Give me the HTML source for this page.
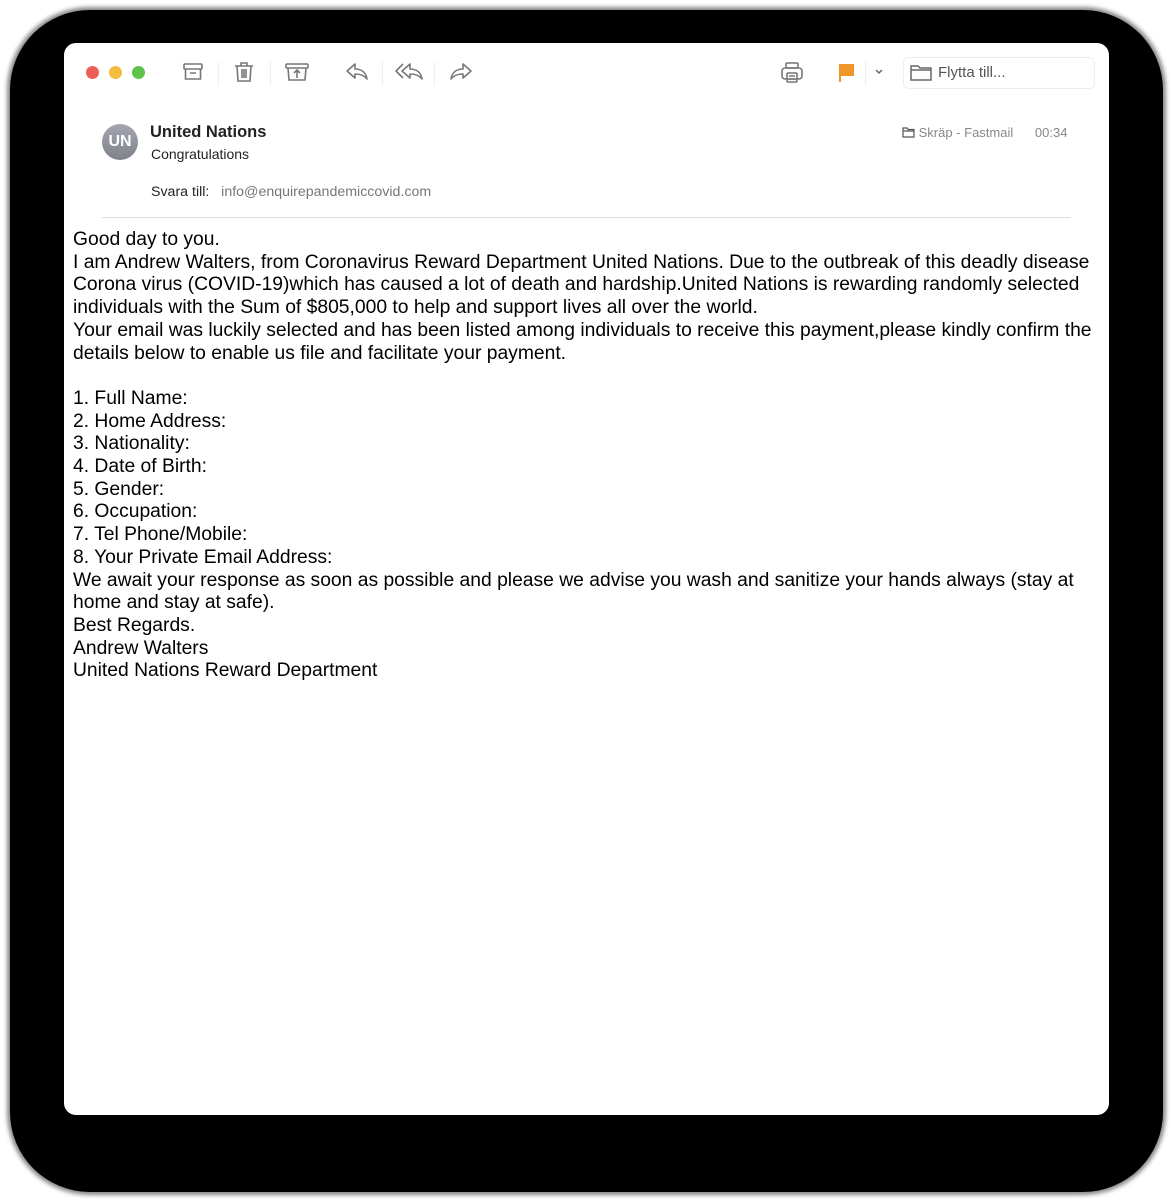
<!DOCTYPE html>
<html><head><meta charset="utf-8"><style>
body{margin:0;width:1173px;height:1200px;background:#fff;position:relative;overflow:hidden;font-family:"Liberation Sans",Arial,sans-serif}
.sh{position:absolute;left:10px;top:10px;width:1153px;height:1182px;border-radius:80px;background:#000;box-shadow:0 0 4px 3px #888}
.win{position:absolute;left:64px;top:43px;width:1045px;height:1072px;background:#fff;border-radius:12px}
.dot{position:absolute;top:23px;width:13px;height:13px;border-radius:50%}
.ic{position:absolute;top:17px}
.sep{position:absolute;top:19px;width:1px;height:24px;background:#eee}
.body{position:absolute;left:9px;top:186px;width:1030px;font-size:19.3px;line-height:22.7px;color:#000}
</style></head><body>
<div class="sh"></div>
<div class="win">
<div class="dot" style="left:22px;background:#ec5f57"></div>
<div class="dot" style="left:45px;background:#f4bd3c"></div>
<div class="dot" style="left:68px;background:#5fc24a"></div>
<svg class="ic" style="left:117px" width="24" height="24" viewBox="0 0 24 24" fill="none" stroke="#777" stroke-width="1.6"><rect x="3" y="4" width="18" height="5" rx="1"/><path d="M4.5 9v10h15V9M9 13h6"/></svg>
<div class="sep" style="left:154px"></div>
<svg class="ic" style="left:168px" width="24" height="24" viewBox="0 0 24 24" fill="none" stroke="#777" stroke-width="1.6"><path d="M3 6h18M9 6V3h6v3M5 6l1 15h12l1-15M10 9v9M12 9v9M14 9v9"/></svg>
<div class="sep" style="left:206px"></div>
<svg class="ic" style="left:220px" width="26" height="24" viewBox="0 0 26 24" fill="none" stroke="#777" stroke-width="1.6"><rect x="2" y="4" width="22" height="4" rx="1"/><path d="M4 8l1 12h16l1-12M13 18v-7M10 13l3-3 3 3"/></svg>
<svg class="ic" style="left:280px" width="26" height="24" viewBox="0 0 26 24" fill="none" stroke="#777" stroke-width="1.6" stroke-linejoin="round"><path d="M11 4L3 11l8 7v-4c5 0 9 1 12 5-1-6-5-10-12-10z"/></svg>
<div class="sep" style="left:318px"></div>
<svg class="ic" style="left:330px" width="30" height="24" viewBox="0 0 30 24" fill="none" stroke="#777" stroke-width="1.6" stroke-linejoin="round"><path d="M9 4L2 11l7 7"/><path d="M16 4L8 11l8 7v-4c5 0 9 1 12 5-1-6-5-10-12-10z"/></svg>
<div class="sep" style="left:370px"></div>
<svg class="ic" style="left:384px" width="26" height="24" viewBox="0 0 26 24" fill="none" stroke="#777" stroke-width="1.6" stroke-linejoin="round"><path d="M15 4l8 7-8 7v-4c-5 0-9 1-12 5 1-6 5-10 12-10z"/></svg>
<svg class="ic" style="left:716px" width="24" height="26" viewBox="0 0 24 26" fill="none" stroke="#777" stroke-width="1.6"><rect x="6" y="3" width="12" height="5" rx="1"/><rect x="2" y="8" width="20" height="11" rx="3"/><rect x="7" y="13" width="10" height="9" rx="1"/><path d="M9 16h6M9 19h6"/></svg>
<svg class="ic" style="left:772px;top:19px" width="20" height="20" viewBox="0 0 20 20"><path d="M3 2h15v12H5v6H3z" fill="#f0952a"/></svg>
<div class="sep" style="left:801px"></div>
<svg class="ic" style="left:810px;top:25px" width="10" height="8" viewBox="0 0 10 8" fill="none" stroke="#666" stroke-width="1.5"><path d="M2 2l3 3 3-3"/></svg>
<div style="position:absolute;left:839px;top:14px;width:190px;height:30px;border:1px solid #eee;border-radius:6px;color:#555;font-size:15px;line-height:30px">
<svg style="position:absolute;left:6px;top:6px" width="22" height="18" viewBox="0 0 22 18" fill="none" stroke="#666" stroke-width="1.5"><path d="M1 2h7l2 2h11v12H1z M1 6h20"/></svg>
<span style="position:absolute;left:34px">Flytta till...</span></div>
<div style="position:absolute;left:38px;top:81px;width:36px;height:36px;border-radius:50%;background:linear-gradient(#a3a5af,#80828c);color:#fff;font-size:16px;font-weight:bold;line-height:36px;text-align:center">UN</div>
<div style="position:absolute;left:86px;top:80px;font-size:16.5px;font-weight:bold;color:#222">United Nations</div>
<div style="position:absolute;left:87px;top:103px;font-size:14px;color:#222">Congratulations</div>
<div style="position:absolute;left:87px;top:141px;font-size:14.2px;color:#222">Svara till:&nbsp;&nbsp; <span style="color:#777">info@enquirepandemiccovid.com</span></div>
<div style="position:absolute;left:838px;top:82px;font-size:13px;color:#888">
<svg width="13" height="11" viewBox="0 0 13 11" fill="none" stroke="#555" stroke-width="1.2" style="vertical-align:-1px"><path d="M1 1h4l1 1.5h6V10H1z M1 4h11"/></svg> Skräp - Fastmail &nbsp;&nbsp;&nbsp;&nbsp; 00:34</div>
<div style="position:absolute;left:38px;top:174px;width:969px;height:1px;background:#ddd"></div>
<div class="body">Good day to you.<br>I am Andrew Walters, from Coronavirus Reward Department United Nations. Due to the outbreak of this deadly disease Corona virus (COVID-19)which has caused a lot of death and hardship.United Nations is rewarding randomly selected individuals with the Sum of $805,000 to help and support lives all over the world.<br>Your email was luckily selected and has been listed among individuals to receive this payment,please kindly confirm the details below to enable us file and facilitate your payment.<br><br>1. Full Name:<br>2. Home Address:<br>3. Nationality:<br>4. Date of Birth:<br>5. Gender:<br>6. Occupation:<br>7. Tel Phone/Mobile:<br>8. Your Private Email Address:<br>We await your response as soon as possible and please we advise you wash and sanitize your hands always (stay at home and stay at safe).<br>Best Regards.<br>Andrew Walters<br>United Nations Reward Department</div>
</div>
</body></html>
